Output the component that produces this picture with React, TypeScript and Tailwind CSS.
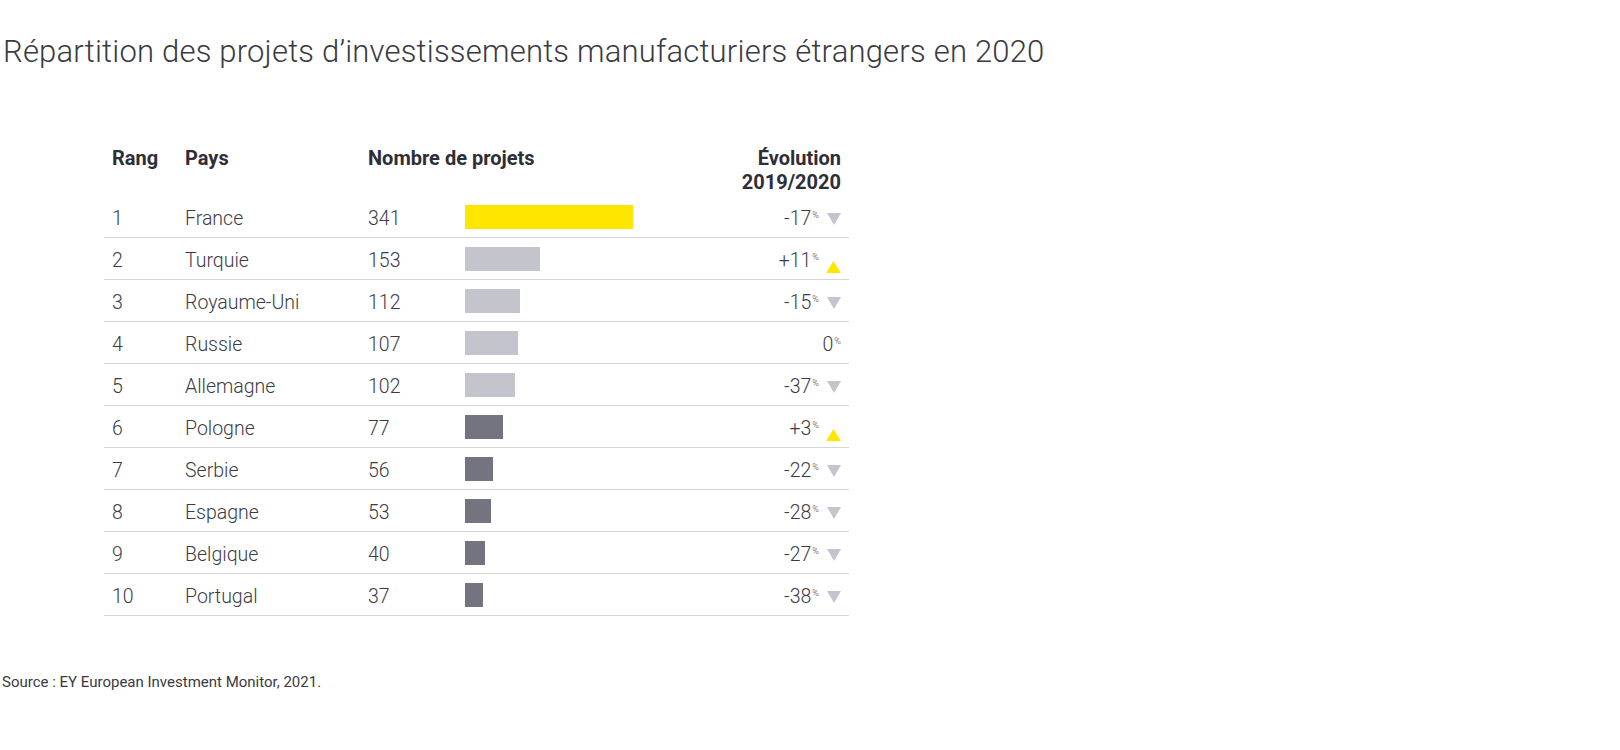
import React from 'react';

interface Row {
  rank: number;
  country: string;
  projects: number;
  evolution: string;
  trend: 'up' | 'down' | 'none';
}

const rows: Row[] = [
  { rank: 1, country: 'France', projects: 341, evolution: '-17', trend: 'down' },
  { rank: 2, country: 'Turquie', projects: 153, evolution: '+11', trend: 'up' },
  { rank: 3, country: 'Royaume-Uni', projects: 112, evolution: '-15', trend: 'down' },
  { rank: 4, country: 'Russie', projects: 107, evolution: '0', trend: 'none' },
  { rank: 5, country: 'Allemagne', projects: 102, evolution: '-37', trend: 'down' },
  { rank: 6, country: 'Pologne', projects: 77, evolution: '+3', trend: 'up' },
  { rank: 7, country: 'Serbie', projects: 56, evolution: '-22', trend: 'down' },
  { rank: 8, country: 'Espagne', projects: 53, evolution: '-28', trend: 'down' },
  { rank: 9, country: 'Belgique', projects: 40, evolution: '-27', trend: 'down' },
  { rank: 10, country: 'Portugal', projects: 37, evolution: '-38', trend: 'down' },
];

const MAX_BAR = 168;
const MAX_VALUE = 341;

const barColor = (rank: number) => {
  if (rank === 1) return 'bg-[#ffe600]';
  if (rank <= 5) return 'bg-[#c4c4cd]';
  return 'bg-[#747480]';
};

const TrendArrow = ({ trend }: { trend: Row['trend'] }) => {
  if (trend === 'none') return null;
  if (trend === 'up') {
    return (
      <svg width="15" height="12" viewBox="0 0 15 12" className="ml-[7px] mt-[12px] shrink-0">
        <polygon points="7.5,0 15,12 0,12" fill="#ffe600" />
      </svg>
    );
  }
  return (
    <svg width="14" height="12" viewBox="0 0 14 12" className="ml-[8px] mt-[1px] shrink-0">
      <polygon points="0,0 14,0 7,12" fill="#c4c4cd" />
    </svg>
  );
};

export default function App() {
  return (
    <div className="w-[1620px] h-[750px] bg-white overflow-hidden font-['Roboto','Liberation_Sans',sans-serif] text-[#2e2e38]">
      {/* Title */}
      <h1 className="pt-[34px] pl-[3px] text-[31px] leading-[36px] font-light tracking-[0.2px] text-[#3a3a42]">
        Répartition des projets d’investissements manufacturiers étrangers en 2020
      </h1>

      {/* Table */}
      <div className="ml-[104px] mt-[76px] w-[745px]">
        <div className="flex h-[50px] text-[20px] leading-[24px] font-bold text-[#2e2e38]">
          <div className="w-[81px] pl-[8px]">Rang</div>
          <div className="w-[183px]">Pays</div>
          <div className="flex-1">Nombre de projets</div>
          <div className="pr-[8px] text-right">
            Évolution
            <br />
            2019/2020
          </div>
        </div>

        {rows.map((r) => (
          <div
            key={r.rank}
            className="flex items-center h-[42px] border-b border-[#d6d6da] text-[19.5px] font-light text-[#3c3c46]"
          >
            <div className="w-[81px] pl-[8px] pt-[4px]">{r.rank}</div>
            <div className="w-[183px] pt-[4px]">{r.country}</div>
            <div className="w-[97px] pt-[4px]">{r.projects}</div>
            <div className="flex-1">
              <div
                className={`h-[24px] ${barColor(r.rank)}`}
                style={{ width: Math.round((r.projects / MAX_VALUE) * MAX_BAR) }}
              />
            </div>
            <div className="flex items-center pr-[8px] pt-[4px]">
              <span className="flex items-start leading-[24px]">
                {r.evolution}
                <span className="text-[9px] leading-[9px] mt-[4px] ml-[1px]">%</span>
              </span>
              <TrendArrow trend={r.trend} />
            </div>
          </div>
        ))}
      </div>

      {/* Source */}
      <p className="mt-[56px] pl-[2px] text-[15px] leading-[20px] text-[#3a3a42]">
        Source : EY European Investment Monitor, 2021.
      </p>
    </div>
  );
}
